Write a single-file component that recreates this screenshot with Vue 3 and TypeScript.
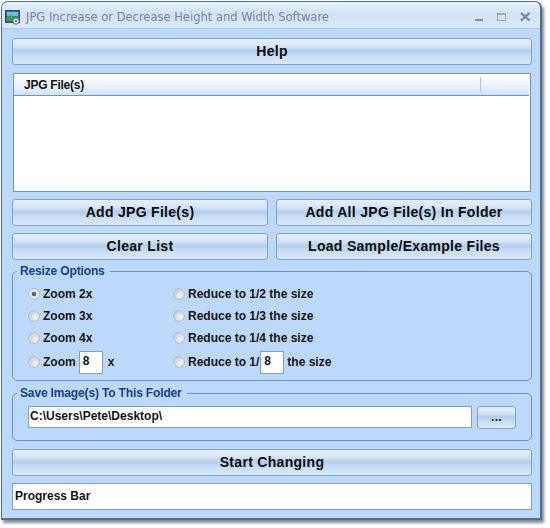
<script setup lang="ts">
const zoomOptions = ['Zoom 2x', 'Zoom 3x', 'Zoom 4x']
const reduceOptions = ['Reduce to 1/2 the size', 'Reduce to 1/3 the size', 'Reduce to 1/4 the size']
</script>

<template>
  <div class="stage">
    <div class="window">
      <header class="titlebar">
        <svg class="app-icon" width="16" height="16" viewBox="0 0 16 16">
          <rect x="0.5" y="1.5" width="14" height="12" fill="#2f6f96" stroke="#33495c" />
          <rect x="2" y="3" width="11" height="4" fill="#6cc0e8" />
          <path d="M2 8l4-2 4 2 3-1v5H2z" fill="#3f9a4e" />
          <circle cx="11" cy="12" r="3.2" fill="#dfe6ea" stroke="#55666f" />
          <circle cx="11" cy="12" r="1" fill="#55666f" />
        </svg>
        <span class="title">JPG Increase or Decrease Height and Width Software</span>
        <div class="controls">
          <svg width="10" height="10" viewBox="0 0 10 10"><rect x="1" y="7" width="8" height="2" fill="#7f8ea3" /></svg>
          <svg width="10" height="10" viewBox="0 0 10 10"><rect x="0.5" y="1.5" width="8" height="7" fill="#d5e2f2" stroke="#9aabc0" /><rect x="0" y="1" width="9" height="2" fill="#9aabc0" /></svg>
          <svg width="11" height="10" viewBox="0 0 11 10"><path d="M1 1l8.5 7.5M9.5 1L1 8.5" stroke="#71839a" stroke-width="2.2" fill="none" /></svg>
        </div>
      </header>

      <main class="body">
        <button class="btn help">Help</button>

        <section class="list">
          <div class="list-head">
            <span class="col-main">JPG File(s)</span>
            <span class="col-rest"></span>
          </div>
        </section>

        <div class="btn-row">
          <button class="btn">Add JPG File(s)</button>
          <button class="btn">Add All JPG File(s) In Folder</button>
        </div>
        <div class="btn-row">
          <button class="btn">Clear List</button>
          <button class="btn">Load Sample/Example Files</button>
        </div>

        <fieldset class="group resize">
          <legend>Resize Options</legend>
          <div class="options">
            <div class="opt-col left">
              <label v-for="(z, i) in zoomOptions" :key="z" class="opt">
                <span class="radio" :class="{ on: i === 0 }"></span>{{ z }}
              </label>
              <label class="opt last">
                <span class="radio"></span>Zoom<span class="num">8</span>x
              </label>
            </div>
            <div class="opt-col">
              <label v-for="r in reduceOptions" :key="r" class="opt">
                <span class="radio"></span>{{ r }}
              </label>
              <label class="opt last">
                <span class="radio"></span>Reduce to 1/<span class="num tight">8</span>the size
              </label>
            </div>
          </div>
        </fieldset>

        <fieldset class="group save">
          <legend>Save Image(s) To This Folder</legend>
          <div class="save-row">
            <div class="path">C:\Users\Pete\Desktop\</div>
            <button class="btn browse">...</button>
          </div>
        </fieldset>

        <button class="btn start">Start Changing</button>
        <div class="progress">Progress Bar</div>
      </main>
    </div>
  </div>
</template>

<style>
html, body { margin: 0; background: #ffffff; }
</style>

<style scoped>
.stage {
  width: 550px;
  height: 528px;
  padding: 1px 0 0 1px;
  box-sizing: border-box;
  font-family: "Liberation Sans", Arial, sans-serif;
}
.window {
  width: 541px;
  height: 519px;
  box-sizing: border-box;
  border: 1px solid #4f6f8f;
  border-bottom-width: 2px;
  border-right-width: 2px;
  border-radius: 7px 7px 0 0;
  background: #bcd9fb;
  box-shadow: 2px 3px 3px rgba(60, 60, 60, 0.6);
  display: flex;
  flex-direction: column;
  overflow: hidden;
}
.titlebar {
  height: 27px;
  flex: none;
  display: flex;
  align-items: center;
  padding: 3px 9px 0 3px;
  box-sizing: border-box;
  background: linear-gradient(#e9f2fc, #d2e2f6 45%, #d9e8fa);
  border-bottom: 1px solid #a9c8ec;
}
.app-icon { flex: none; margin-right: 5px; }
.title {
  font-family: "DejaVu Sans", sans-serif;
  font-size: 11.5px;
  color: #76869a;
  white-space: nowrap;
}
.controls {
  margin-left: auto;
  display: flex;
  align-items: center;
  gap: 13px;
}
.body {
  flex: 1;
  margin: 0 2px;
  padding: 9px 6px 0 8px;
  display: flex;
  flex-direction: column;
}
.btn {
  display: block;
  box-sizing: border-box;
  margin: 0;
  padding: 0 0 2px;
  width: 100%;
  border: 1px solid #7ea3cb;
  border-radius: 3px;
  background: linear-gradient(#e8f2fe 0%, #d3e4f9 30%, #b4cde9 48%, #c5dbf5 65%, #dbeafd 100%);
  font-family: "Liberation Sans", Arial, sans-serif;
  font-weight: 700;
  font-size: 14px;
  letter-spacing: 0.3px;
  color: #0a0a0a;
}
.help { height: 27px; flex: none; }
.list {
  height: 119px;
  flex: none;
  margin: 8px 1px 0;
  box-sizing: border-box;
  border: 1px solid #6f93b8;
  background: #fff;
}
.list-head {
  height: 21px;
  display: flex;
  border-bottom: 1px solid #6c95bd;
  margin-right: 1px;
  background: linear-gradient(#ffffff, #f3f8fe 40%, #cfe2f8);
  font-size: 12px;
  font-weight: 700;
  letter-spacing: -0.25px;
  color: #111;
}
.col-main { flex: 1; padding-left: 10px; border-right: 1px solid #a9c8e8; margin: 3px 0; line-height: 16px; }
.col-rest { width: 48px; }
.btn-row { display: flex; gap: 8px; flex: none; margin-top: 7px; }
.btn-row .btn { flex: 1; height: 27px; }
.group {
  margin: 0;
  padding: 0;
  min-width: 0;
  box-sizing: border-box;
  border: 1px solid #6f93bd;
  border-radius: 5px;
  flex: none;
}
.group legend {
  margin-left: 4px;
  padding: 0 5px 0 3px;
  font-size: 12px;
  font-weight: 700;
  letter-spacing: -0.15px;
  line-height: 14px;
  color: #17437f;
}
.resize { margin-top: 4px; height: 117px; }
.options { display: flex; padding: 5px 0 0 15px; }
.opt-col { display: flex; flex-direction: column; }
.opt-col.left { width: 145px; }
.opt {
  display: flex;
  align-items: center;
  height: 22px;
  font-size: 12px;
  font-weight: 700;
  color: #141414;
  white-space: nowrap;
}
.opt.last { height: 26px; }
.radio {
  flex: none;
  width: 12px;
  height: 12px;
  margin-right: 3px;
  box-sizing: border-box;
  border: 1px solid #b7bfc9;
  border-radius: 50%;
  background: radial-gradient(circle at 65% 65%, #f2f4f6, #c6cbd1 80%);
}
.radio.on { background: radial-gradient(circle, #56678a 0 2px, #dfe3e8 2.5px); }
.num {
  box-sizing: border-box;
  width: 24px;
  height: 23px;
  margin: 0 5px 0 3px;
  padding: 2px 0 0 3px;
  background: #fff;
  border: 1px solid #7f9fc4;
  font-size: 12px;
  line-height: 14px;
}
.num.tight { margin: 0 3px 0 1px; }
.save { margin-top: 5px; height: 55px; }
.save-row { display: flex; align-items: flex-start; padding: 6px 15px 0 15px; gap: 5px; }
.path {
  flex: 1;
  box-sizing: border-box;
  height: 22px;
  background: #fff;
  border: 1px solid #7f9fc4;
  padding-left: 1px;
  font-size: 12px;
  font-weight: 700;
  line-height: 19px;
  color: #141414;
}
.browse { width: 39px; flex: none; height: 23px; font-size: 12px; }
.start { height: 27px; flex: none; margin-top: 8px; }
.progress {
  margin-top: 7px;
  height: 27px;
  flex: none;
  box-sizing: border-box;
  background: #fff;
  border: 1px solid #7f9fc4;
  padding-left: 2px;
  font-size: 12px;
  font-weight: 700;
  line-height: 25px;
  color: #141414;
}
</style>
